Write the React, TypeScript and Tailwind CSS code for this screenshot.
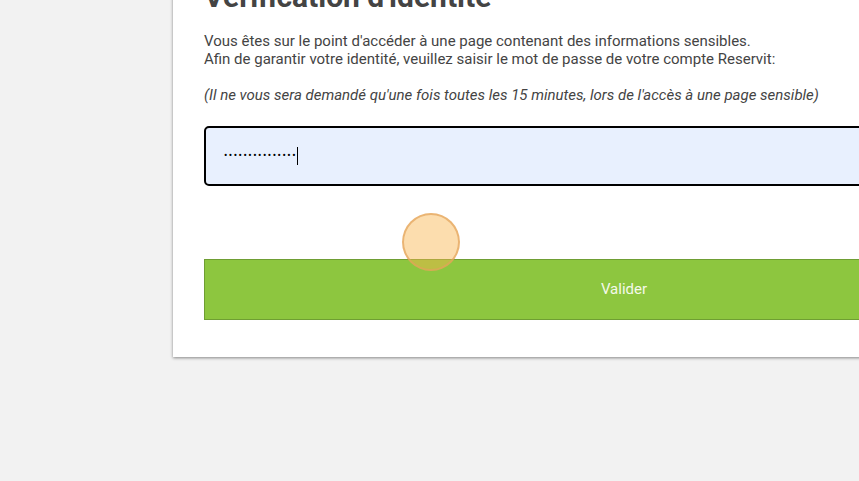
import React from 'react';

const font = { fontFamily: 'Roboto, "Liberation Sans", sans-serif' };

const App: React.FC = () => {
  return (
    <div className="relative w-[859px] h-[481px] overflow-hidden bg-[#f2f2f2]" style={font}>
      <div className="ml-[173px] -mt-[21px] w-[902px] bg-white shadow-[0_1px_3px_rgba(0,0,0,0.45)] px-[31px] pb-[37px]">
        <h1 className="text-[30px] leading-[36px] font-bold text-[#444]">Vérification d'identité</h1>
        <div className="mt-[17px] text-[15px] leading-[18px] text-[#444]">
          <p>Vous êtes sur le point d'accéder à une page contenant des informations sensibles.</p>
          <p>Afin de garantir votre identité, veuillez saisir le mot de passe de votre compte Reservit:</p>
          <p className="mt-[18px] italic">(Il ne vous sera demandé qu'une fois toutes les 15 minutes, lors de l'accès à une page sensible)</p>
        </div>
        <div className="mt-[22px] h-[60px] rounded-[5px] border-2 border-black bg-[#e8f0fe] flex items-center pl-[18px]">
          <span className="text-[10px] tracking-[1.5px] text-black leading-none">•••••••••••••••</span>
          <span className="w-px h-[18px] bg-black" />
        </div>
        <button className="mt-[73px] w-full h-[61px] bg-[#8dc63f] border border-[#6f9e33] text-[15px] text-[#f4f9ea]">
          Valider
        </button>
      </div>
      <div className="absolute left-[402px] top-[213px] w-[58px] h-[58px] rounded-full bg-[#f8b44c]/45 border-2 border-[#e3a35a]/70" />
    </div>
  );
};

export default App;
